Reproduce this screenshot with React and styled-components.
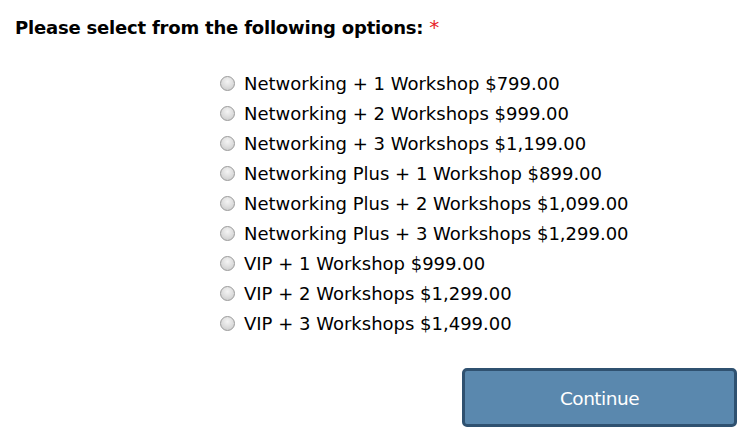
import React from "react";
import styled, { createGlobalStyle } from "styled-components";

const GlobalStyle = createGlobalStyle`
  html, body {
    margin: 0;
    padding: 0;
    background: #fff;
  }
  body {
    font-family: "DejaVu Sans", Tahoma, sans-serif;
    color: #000;
  }
`;

const Page = styled.div`
  width: 750px;
  height: 442px;
  box-sizing: border-box;
  padding: 16px 13px 0 15px;
  display: flex;
  flex-direction: column;
`;

const Heading = styled.div`
  font-size: 18px;
  font-weight: bold;
  letter-spacing: -0.2px;
  line-height: 24px;
  height: 24px;
`;

const Required = styled.span`
  color: #e8232a;
  font-weight: normal;
  font-size: 20px;
  line-height: 1;
  margin-left: 6px;
`;

const OptionList = styled.div`
  display: flex;
  flex-direction: column;
  margin: 28px 0 0 205px;
`;

const Option = styled.label`
  display: flex;
  align-items: center;
  height: 30px;
  font-size: 18px;
  cursor: pointer;
`;

const Radio = styled.span`
  width: 13px;
  height: 13px;
  border-radius: 50%;
  border: 1px solid #9a9a9a;
  background: radial-gradient(circle at 50% 35%, #f4f4f4 0%, #dcdcdc 55%, #c6c6c6 100%);
  margin-right: 9px;
  flex: none;
`;

const Footer = styled.div`
  display: flex;
  justify-content: flex-end;
  margin-top: 30px;
`;

const Button = styled.button`
  width: 275px;
  height: 59px;
  box-sizing: border-box;
  background: #5a88ae;
  border: 3px solid #2f5170;
  border-radius: 5px;
  color: #fff;
  font-family: "DejaVu Sans", Tahoma, sans-serif;
  font-size: 18.5px;
  letter-spacing: -0.5px;
  padding-top: 2px;
  cursor: pointer;
`;

const options = [
  "Networking + 1 Workshop $799.00",
  "Networking + 2 Workshops $999.00",
  "Networking + 3 Workshops $1,199.00",
  "Networking Plus + 1 Workshop $899.00",
  "Networking Plus + 2 Workshops $1,099.00",
  "Networking Plus + 3 Workshops $1,299.00",
  "VIP + 1 Workshop $999.00",
  "VIP + 2 Workshops $1,299.00",
  "VIP + 3 Workshops $1,499.00",
];

export default function App() {
  return (
    <>
      <GlobalStyle />
      <Page>
        <Heading>
          Please select from the following options:<Required>*</Required>
        </Heading>
        <OptionList>
          {options.map((o) => (
            <Option key={o}>
              <Radio />
              {o}
            </Option>
          ))}
        </OptionList>
        <Footer>
          <Button>Continue</Button>
        </Footer>
      </Page>
    </>
  );
}
